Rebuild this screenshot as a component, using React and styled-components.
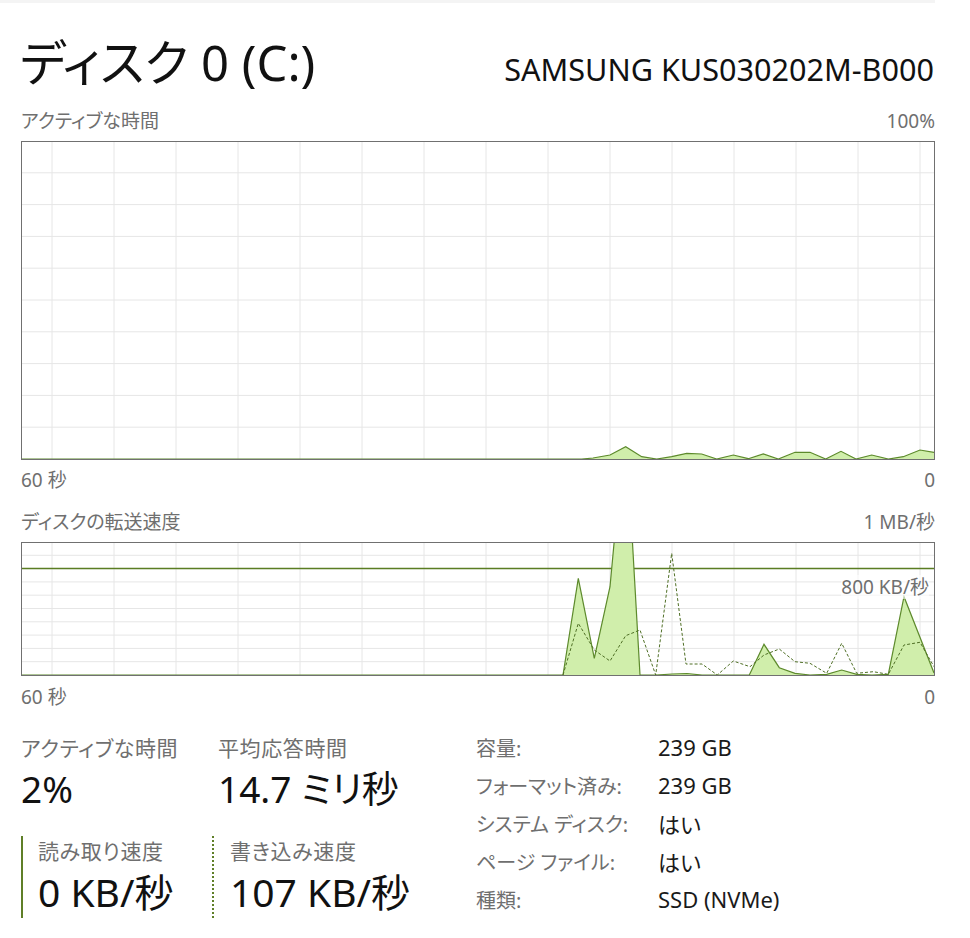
import React from 'react';
import styled, { createGlobalStyle } from 'styled-components';

const GlobalStyle = createGlobalStyle`
  body {
    margin: 0;
    background: #ffffff;
    font-family: "Noto Sans", "Noto Sans CJK JP", sans-serif;
    font-feature-settings: "palt";
  }
`;

const Page = styled.div`
  width: 914px;
  padding: 0 0 20px 21px;
  border-top: 3px solid #f4f4f4;
  box-sizing: content-box;
`;

const Header = styled.div`
  display: flex;
  justify-content: space-between;
  align-items: baseline;
  padding-top: 35px;
`;

const Title = styled.h1`
  margin: 0 0 0 -1px;
  font-size: 49px;
  line-height: 49px;
  font-weight: 400;
  color: #111;
`;

const Model = styled.div`
  font-size: 30.6px;
  line-height: 30px;
  color: #111;
  margin-right: 1px;
`;

const LabelRow = styled.div`
  display: flex;
  justify-content: space-between;
  height: 24px;
  line-height: 24px;
  font-size: 19px;
  color: #6f6f6f;
  margin-top: ${p => p.$top || 0}px;
  margin-bottom: ${p => p.$bottom || 0}px;
`;

const ChartBox = styled.div`
  position: relative;
  height: ${p => p.$h}px;
  border: 1px solid #707070;
  box-sizing: border-box;

  svg {
    display: block;
    width: 100%;
    height: 100%;
  }
`;

const ScaleTag = styled.span`
  position: absolute;
  right: 5px;
  top: 32px;
  font-size: 19px;
  line-height: 24px;
  color: #6f6f6f;
  background: rgba(255, 255, 255, 0.6);
`;

const Bottom = styled.div`
  display: flex;
  margin-top: 19px;
`;

const StatsLeft = styled.div`
  width: 455px;
  padding-top: 7px;
`;

const StatRow = styled.div`
  display: flex;
`;

const Stat = styled.div`
  width: ${p => p.$w}px;
`;

const StatLabel = styled.div`
  font-size: 21px;
  letter-spacing: 0.6px;
  line-height: 26px;
  height: 26px;
  color: #6f6f6f;
`;

const StatValue = styled.div`
  font-size: ${p => p.$size || 37}px;
  line-height: ${p => p.$lh || 42}px;
  color: #111;
  margin-top: ${p => p.$top || 0}px;
`;

const RateGroup = styled.div`
  width: ${p => p.$w}px;
  box-sizing: border-box;
  margin-top: 26px;
  padding: 2px 0 3px ${p => p.$pad}px;
  border-left: 2px ${p => (p.$dotted ? 'dotted' : 'solid')} #5f7f28;
`;

const InfoGrid = styled.div`
  display: grid;
  grid-template-columns: 182px auto;
  grid-auto-rows: 38px;
  align-items: center;
`;

const InfoLabel = styled.div`
  font-size: 20px;
  color: #6f6f6f;
`;

const InfoValue = styled.div`
  font-size: 22px;
  color: #1a1a1a;
`;

const LINE = '#5d8a2c';
const FILL = '#d0eeab';
const GRID = '#e6e6e6';

const toPts = arr => arr.map(([x, y]) => `${x},${y}`).join(' ');

const Grid = ({ top, height, rows }) => {
  const cols = [];
  for (let x = 52; x < 934; x += 62) cols.push(x);
  const lines = [];
  for (let i = 1; i < rows; i++) lines.push(top + (height / rows) * i);
  return (
    <g stroke={GRID} strokeWidth="1">
      {cols.map(x => <line key={'v' + x} x1={x} x2={x} y1={top} y2={top + height} />)}
      {lines.map(y => <line key={'h' + y} x1="21" x2="935" y1={y} y2={y} />)}
    </g>
  );
};

const activeData = [
  [22, 459], [566, 459], [581.7, 459], [593, 458], [610, 455], [625.7, 446.7], [641.7, 456.7],
  [656.7, 459], [671.7, 456.7], [686.7, 453.3], [701.7, 454], [716.7, 459], [733.3, 455],
  [748.3, 458.7], [763.3, 454], [778.3, 459], [795, 452.3], [810, 452.3], [825.7, 459],
  [841, 451.3], [856, 459], [871.7, 455], [888.3, 459], [903.3, 456.7], [920, 450], [934, 452.3],
];

const readData = [
  [22, 675], [563, 675], [578.3, 578.3], [594.3, 658.3], [610, 586.7], [625.5, 420], [640, 675],
  [656, 675], [672, 674], [687, 673.5], [702, 675], [733, 675], [749.3, 675], [764, 644.3],
  [779.3, 667.7], [795, 673.3], [810, 675], [826.7, 674.3], [841.7, 670], [856.7, 674.3],
  [872, 675], [888.3, 674.3], [904, 596.7], [934, 673],
];

const writeData = [
  [563, 675], [578.3, 623.3], [594.3, 650], [610, 661], [625.7, 635.7], [640, 630], [655.7, 675],
  [671.7, 553.3], [686, 664], [702, 664], [717.3, 675], [733.3, 661], [750, 666.7], [764, 655],
  [779.3, 649], [795, 661.7], [810, 663.3], [826.7, 673.3], [841.7, 643.3], [856.7, 673.3],
  [873.3, 671.7], [888.3, 674.3], [904, 645], [920, 642.3], [934, 666.7],
];

const ActiveChart = () => (
  <ChartBox $h={319}>
    <svg viewBox="22 142 912 317" preserveAspectRatio="none">
      <Grid top={141} height={318} rows={10} />
      <polygon points={toPts([...activeData, [934, 460], [22, 460]])} fill={FILL} />
      <polyline points={toPts(activeData)} fill="none" stroke={LINE} strokeWidth="1.2" />
    </svg>
  </ChartBox>
);

const TransferChart = () => (
  <ChartBox $h={134}>
    <svg viewBox="22 543 912 132" preserveAspectRatio="none">
      <Grid top={542} height={133} rows={10} />
      <line x1="21" x2="935" y1="568.5" y2="568.5" stroke="#5a7d22" strokeWidth="1.3" />
      <polygon points={toPts([...readData, [934, 676], [22, 676]])} fill={FILL} />
      <polyline points={toPts(readData)} fill="none" stroke={LINE} strokeWidth="1.2" />
      <polyline points={toPts(writeData)} fill="none" stroke="#4f6f25" strokeWidth="1" strokeDasharray="3 2" />
    </svg>
    <ScaleTag>800 KB/秒</ScaleTag>
  </ChartBox>
);

const info = [
  ['容量:', '239 GB'],
  ['フォーマット済み:', '239 GB'],
  ['システム ディスク:', 'はい'],
  ['ページ ファイル:', 'はい'],
  ['種類:', 'SSD (NVMe)'],
];

const App = () => (
  <>
    <GlobalStyle />
    <Page>
      <Header>
        <Title>ディスク 0 (C:)</Title>
        <Model>SAMSUNG KUS030202M-B000</Model>
      </Header>

      <LabelRow $top={22} $bottom={8}>
        <span>アクティブな時間</span>
        <span>100%</span>
      </LabelRow>
      <ActiveChart />
      <LabelRow $top={8}>
        <span>60 秒</span>
        <span>0</span>
      </LabelRow>

      <LabelRow $top={18} $bottom={8}>
        <span>ディスクの転送速度</span>
        <span>1 MB/秒</span>
      </LabelRow>
      <TransferChart />
      <LabelRow $top={9}>
        <span>60 秒</span>
        <span>0</span>
      </LabelRow>

      <Bottom>
        <StatsLeft>
          <StatRow>
            <Stat $w={197}>
              <StatLabel>アクティブな時間</StatLabel>
              <StatValue $top={7}>2%</StatValue>
            </Stat>
            <Stat $w={250}>
              <StatLabel>平均応答時間</StatLabel>
              <StatValue $top={7}>14.7 ミリ秒</StatValue>
            </Stat>
          </StatRow>
          <StatRow>
            <RateGroup $w={191} $pad={15}>
              <StatLabel>読み取り速度</StatLabel>
              <StatValue $size={39} $lh={46} $top={5}>0 KB/秒</StatValue>
            </RateGroup>
            <RateGroup $w={250} $pad={16} $dotted>
              <StatLabel>書き込み速度</StatLabel>
              <StatValue $size={39} $lh={46} $top={5}>107 KB/秒</StatValue>
            </RateGroup>
          </StatRow>
        </StatsLeft>
        <InfoGrid>
          {info.map(([k, v]) => (
            <React.Fragment key={k}>
              <InfoLabel>{k}</InfoLabel>
              <InfoValue>{v}</InfoValue>
            </React.Fragment>
          ))}
        </InfoGrid>
      </Bottom>
    </Page>
  </>
);

export default App;
